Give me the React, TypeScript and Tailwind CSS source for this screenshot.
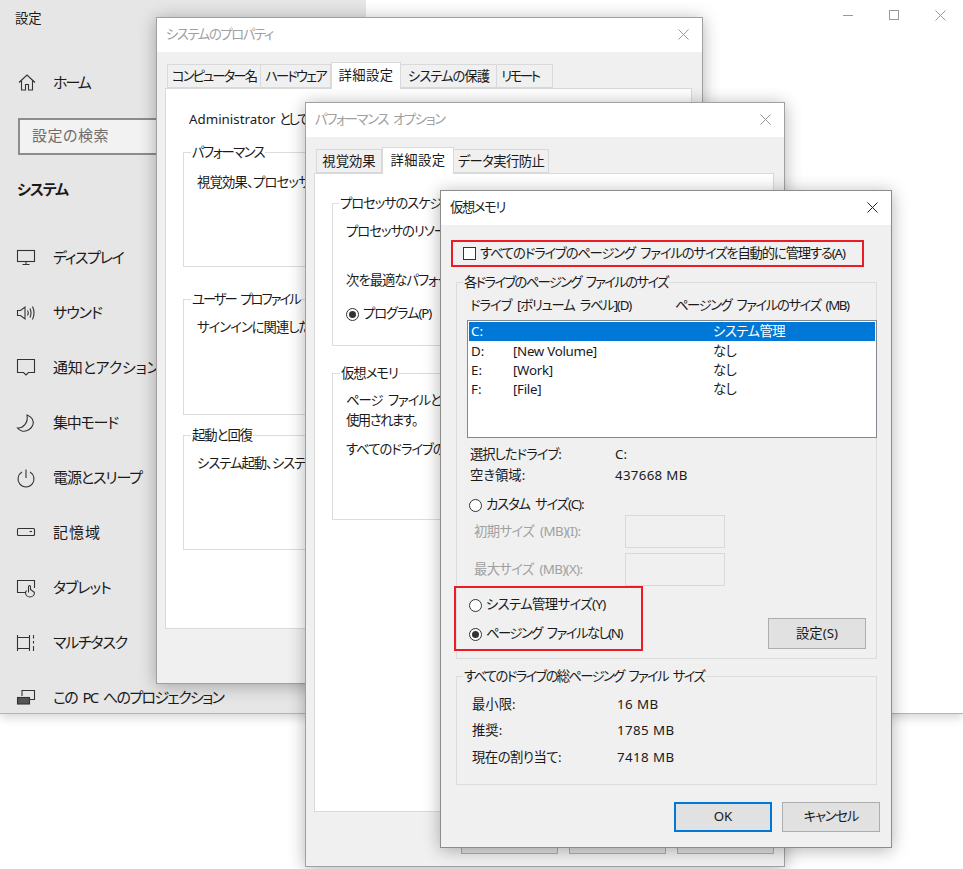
import type { ReactNode } from "react";

const navItems = [
  { label: "ディスプレイ", text: "tracking-[-1.3px]", icon: <><rect x="1.5" y="2.5" width="17" height="11" /><path d="M10 13.5V16M6.5 16.5H13.5" /></> },
  { label: "サウンド", text: "tracking-[-1px]", icon: <path d="M1.5 7.5H4.5L9 4V16L4.5 12.5H1.5ZM11.5 7.5Q13 10 11.5 12.5M14 5.5Q16 10 14 14.5M16.5 3.5Q19.5 10 16.5 16.5" /> },
  { label: "通知とアクション", text: "tracking-[-0.2px]", icon: <path d="M1.5 1.5H18.5V14.5H12.5L10 17L7.5 14.5H1.5Z" /> },
  { label: "集中モード", text: "tracking-[-1.2px]", icon: <path d="M11 2C16 3.5 18 8 17 11.5C15.5 16 11 19 6 18C4 17.5 2.5 16.5 1.5 15C7 15.5 12.5 10 11 2Z" /> },
  { label: "電源とスリープ", text: "tracking-[-1.1px]", icon: <path d="M6 4A8 8 0 1 0 14 4M10 1.5V10" /> },
  { label: "記憶域", text: "tracking-[1px]", icon: <><rect x="1.5" y="5.5" width="17" height="7" rx="1" /><path d="M13.5 8.5H16" /></> },
  { label: "タブレット", text: "tracking-[-1px]", icon: <path d="M9 14.5H1.5V2.5H18.5V10M18.5 14.5A4.5 4.5 0 1 1 9.5 14.5L10.5 12.5M12.5 14.5V8.5A1 1 0 0 1 14.5 8.5V11.5L18.5 14.5" /> },
  { label: "マルチタスク", text: "tracking-[-1.2px]", icon: <path d="M1.5 2V18M13.5 2V18M1.5 4.5H13.5M1.5 15.5H13.5M17.5 2V5.5M17.5 8V10.5M17.5 13V18" /> },
  { label: "この PC へのプロジェクション", text: "tracking-[-1.65px]", icon: <><path d="M6 8V2.5H18.5V11.5H14" /><rect x="1.5" y="9.5" width="12" height="6.5" fill="#555" /></> },
];

const NavIcon = ({ children }: { children: ReactNode }) => (
  <svg viewBox="0 0 20 20" className="h-5 w-5 shrink-0" fill="none" stroke="#333" strokeWidth="1.1">
    {children}
  </svg>
);

const CloseIcon = ({ color }: { color: string }) => (
  <svg viewBox="0 0 11 11" className="h-[11px] w-[11px]" fill="none" stroke={color} strokeWidth="1">
    <path d="M0.5 0.5L10.5 10.5M10.5 0.5L0.5 10.5" />
  </svg>
);

const TitleBar = ({ title, active }: { title: string; active?: boolean }) => (
  <div className={`flex h-[34px] shrink-0 items-center justify-between bg-white pr-[13px] pb-[2px] pl-[9px] tracking-[-1.4px] ${active ? "text-[#222]" : "text-[#a0a0a0]"}`}>
    <span className="mt-[2px]">{title}</span>
    <CloseIcon color={active ? "#222" : "#999"} />
  </div>
);

const Group = ({ title, titleClass, className, bg, children }: { title: string; titleClass: string; className: string; bg: string; children?: ReactNode }) => (
  <div className={`relative border border-[#dcdcdc] ${className}`}>
    <span className={`absolute -top-[10px] px-px leading-[18px] whitespace-nowrap ${titleClass} ${bg}`}>{title}</span>
    {children}
  </div>
);

const Tab = ({ label, width, text, selected }: { label: string; width: string; text?: string; selected?: boolean }) => (
  <div
    className={`flex items-center justify-center border border-[#d9d9d9] whitespace-nowrap ${width} ${text ?? ""} ${
      selected ? "relative z-10 -mb-px h-[27px] border-b-0 bg-white" : "h-[24px] -ml-px bg-[#f0f0f0] pt-px"
    }`}
  >
    {label}
  </div>
);

const Radio = ({ checked }: { checked?: boolean }) => (
  <span className="flex h-[13px] w-[13px] shrink-0 items-center justify-center rounded-full border border-[#333] bg-white">
    {checked && <span className="h-[7px] w-[7px] rounded-full bg-[#333]" />}
  </span>
);

const RadioRow = ({ label, text, checked }: { label: string; text: string; checked?: boolean }) => (
  <div className="flex h-[20px] items-center gap-[4px]">
    <Radio checked={checked} />
    <span className={`whitespace-nowrap ${text}`}>{label}</span>
  </div>
);

const DriveRow = ({ drive, label, size, selected }: { drive: string; label?: string; size: string; selected?: boolean }) => (
  <div className={`flex h-[19px] items-center pl-[2px] ${selected ? "bg-[#0078d7] text-white" : "pt-[2px]"}`}>
    <span className="w-[42px]">{drive}</span>
    <span className="w-[200px] tracking-[-0.3px] [word-spacing:0]">{label}</span>
    <span className="tracking-[-0.5px]">{size}</span>
  </div>
);

const DisabledField = ({ label, text }: { label: string; text: string }) => (
  <div className="flex h-[33px] items-center pl-[7px] text-[#a0a0a0]">
    <span className={`w-[151px] whitespace-nowrap ${text}`}>{label}</span>
    <div className="h-[33px] w-[100px] border border-[#d9d9d9] bg-[#f0f0f0]" />
  </div>
);

const Button = ({ label, className }: { label: string; className: string }) => (
  <div className={`flex items-center justify-center bg-[#e1e1e1] ${className}`}>{label}</div>
);

const SummaryRow = ({ label, value, text, className }: { label: string; value: string; text?: string; className: string }) => (
  <div className={`flex h-[20px] items-center ${className}`}>
    <span className={`w-[145px] ${text ?? ""}`}>{label}</span>
    <span className="tracking-[0.4px] [word-spacing:0]">{value}</span>
  </div>
);

export default function App() {
  return (
    <div className="relative h-[869px] w-[963px] overflow-hidden bg-white font-['Noto_Sans','Noto_Sans_CJK_JP',sans-serif] text-[13.33px] text-[#1a1a1a] [font-feature-settings:'palt'] [word-spacing:3px]">
      {/* Settings window behind the dialogs */}
      <div className="flex h-[714px] border-b border-[#b4b4b4] shadow-[0_3px_10px_rgba(0,0,0,0.18)]">
        <aside className="w-[366px] shrink-0 overflow-hidden bg-[#e6e6e6] text-[15px]">
          <div className="flex h-[38px] items-center pl-[15px] text-[13.33px]">設定</div>
          <div className="mt-[23px] flex h-[44px] items-center gap-[17px] pl-4">
            <NavIcon>
              <path d="M3 9.5L11 2L19 9.5M5.5 7.5V17H9.5V11.5H12.5V17H16.5V7.5" />
            </NavIcon>
            <span className="pb-px tracking-[-2px]">ホーム</span>
          </div>
          <div className="mt-[13px] ml-[18px] flex h-[37px] w-[330px] items-center border-2 border-[#8c8c8c] bg-[#f2f2f2] pb-[2px] pl-3 tracking-[0.5px] text-[#6e6e6e]">
            設定の検索
          </div>
          <div className="mt-[22px] flex h-[24px] items-center pl-[17px] font-bold tracking-[-1.1px]">システム</div>
          <nav className="mt-[29px]">
            {navItems.map((item) => (
              <div key={item.label} className="flex h-[55px] items-center gap-[17px] pl-4">
                <NavIcon>{item.icon}</NavIcon>
                <span className={`pb-px whitespace-nowrap ${item.text}`}>{item.label}</span>
              </div>
            ))}
          </nav>
        </aside>
        <main className="relative flex-1 bg-white">
          <div className="flex h-[30px] items-center justify-end gap-[36px] pr-[17px]">
            <div className="h-px w-[10px] bg-[#999]" />
            <div className="h-[10px] w-[10px] border border-[#999]" />
            <CloseIcon color="#999" />
          </div>
          <p className="absolute top-[133px] left-[350px] text-[14px] leading-[20px] tracking-[-1px] whitespace-nowrap text-[#0078d7]">レード</p>
        </main>
      </div>

      {/* システムのプロパティ */}
      <div className="absolute top-[17px] left-[156px] flex h-[667px] w-[547px] flex-col border border-[#a0a0a0] bg-[#f0f0f0] shadow-[0_2px_16px_rgba(0,0,0,0.3)]">
        <TitleBar title="システムのプロパティ" />
        <div className="mt-[10px] flex h-[26px] items-end pl-[11px]">
          <Tab label="コンピューター名" width="w-[94px]" text="tracking-[-1.9px]" />
          <Tab label="ハードウェア" width="w-[71px]" text="tracking-[-1.9px]" />
          <Tab label="詳細設定" width="w-[70px]" text="tracking-[0.4px]" selected />
          <Tab label="システムの保護" width="w-[97px]" text="tracking-[-1px]" />
          <Tab label="リモート" width="w-[57px]" text="pr-[9px] tracking-[-2.4px]" />
        </div>
        <div className="ml-[8px] h-[541px] w-[527px] border border-[#d9d9d9] bg-white pt-[21px] pl-[23px]">
          <p className="h-[20px] whitespace-nowrap [word-spacing:0]">
            <span>Administrator </span>
            <span className="tracking-[-2.2px]">としてログオンしない場合は、これらのほとんどは変更できません。</span>
          </p>
          <Group title="パフォーマンス" titleClass="left-[7px] tracking-[-1.5px]" bg="bg-white" className="mt-[22px] -ml-[6px] h-[115px] w-[498px] pt-[20px] pl-[13px] tracking-[-0.8px]">
            視覚効果、プロセッサのスケジュール、メモリ使用、および仮想メモリ
          </Group>
          <Group title="ユーザー プロファイル" titleClass="left-[7px] tracking-[-2px]" bg="bg-white" className="mt-[32px] -ml-[6px] h-[116px] w-[498px] pt-[18px] pl-[13px] tracking-[-1px]">
            サインインに関連したデスクトップ設定
          </Group>
          <Group title="起動と回復" titleClass="left-[7px]" bg="bg-white" className="mt-[20px] -ml-[6px] h-[115px] w-[498px] pt-[18px] pl-[13px] tracking-[-1px]">
            システム起動、システム エラー、およびデバッグ情報
          </Group>
        </div>
      </div>

      {/* パフォーマンス オプション */}
      <div className="absolute top-[102px] left-[305px] flex h-[765px] w-[480px] flex-col border border-[#a0a0a0] bg-[#f0f0f0] shadow-[0_2px_16px_rgba(0,0,0,0.3)]">
        <TitleBar title="パフォーマンス オプション" />
        <div className="mt-[10px] flex h-[26px] items-end pl-[11px]">
          <Tab label="視覚効果" width="w-[66px]" />
          <Tab label="詳細設定" width="w-[72px]" text="tracking-[0.4px]" selected />
          <Tab label="データ実行防止" width="w-[96px]" text="tracking-[-0.6px]" />
        </div>
        <div className="ml-[8px] h-[639px] w-[460px] border border-[#d9d9d9] bg-white pt-[29px] pl-[17px] tracking-[-1px]">
          <Group title="プロセッサのスケジュール" titleClass="left-[6px] tracking-[-1.1px]" bg="bg-white" className="h-[143px] w-[424px] pt-[18px] pl-[13px]">
            <p className="h-[20px]">プロセッサのリソースの割り当て</p>
            <p className="mt-[29px] h-[20px]">次を最適なパフォーマンスに調整</p>
            <div className="mt-[13px]">
              <RadioRow label="プログラム(P)" text="tracking-[-1.1px]" checked />
            </div>
          </Group>
          <Group title="仮想メモリ" titleClass="left-[7px] tracking-[-1px]" bg="bg-white" className="mt-[27px] h-[147px] w-[424px] pt-[17px] pl-[13px]">
            <p className="h-[20px] whitespace-nowrap">ページ ファイルとは、RAM のように</p>
            <p className="h-[20px] tracking-[-1.5px]">使用されます。</p>
            <p className="mt-[9px] h-[20px] whitespace-nowrap">すべてのドライブの総ページング ファイル サイズ:</p>
          </Group>
        </div>
        <div className="mt-[11px] ml-[155px] flex gap-[11px]">
          <Button label="OK" className="h-[31px] w-[97px] border border-[#adadad]" />
          <Button label="キャンセル" className="h-[31px] w-[97px] border border-[#adadad]" />
          <Button label="適用(A)" className="h-[31px] w-[97px] border border-[#adadad]" />
        </div>
      </div>

      {/* 仮想メモリ */}
      <div className="absolute top-[190px] left-[440px] flex h-[658px] w-[452px] flex-col border border-[#8c8c8c] bg-[#f0f0f0] shadow-[0_2px_16px_rgba(0,0,0,0.3)]">
        <TitleBar title="仮想メモリ" active />
        <div className="pt-[15px]">
          <div className="ml-[10px] flex h-[27px] w-[413px] items-center gap-[4px] border-2 border-[#ed1c24] pl-[10px]">
            <span className="h-[13px] w-[13px] shrink-0 border border-[#333] bg-white" />
            <span className="tracking-[-1.15px] whitespace-nowrap">すべてのドライブのページング ファイルのサイズを自動的に管理する(A)</span>
          </div>

          <Group title="各ドライブのページング ファイルのサイズ" titleClass="left-[6px] tracking-[-1.65px]" bg="bg-[#f0f0f0]" className="mt-[15px] ml-[15px] h-[377px] w-[421px] pt-[13px] pl-[10px]">
            <div className="mb-[4px] flex h-[20px] items-center pl-[3px]">
              <span className="w-[47px] tracking-[-1px]">ドライブ</span>
              <span className="w-[158px] tracking-[-1.2px]">[ボリューム ラベル](D)</span>
              <span className="tracking-[-1.4px]">ページング ファイルのサイズ (MB)</span>
            </div>
            <div className="h-[118px] w-[410px] border border-[#828790] bg-white p-px">
              <DriveRow drive="C:" size="システム管理" selected />
              <DriveRow drive="D:" label="[New Volume]" size="なし" />
              <DriveRow drive="E:" label="[Work]" size="なし" />
              <DriveRow drive="F:" label="[File]" size="なし" />
            </div>
            <div className="mt-[6px] flex h-[21px] items-center pl-[3px]">
              <span className="w-[145px] tracking-[-1px]">選択したドライブ:</span>
              <span>C:</span>
            </div>
            <div className="flex h-[21px] items-center pl-[3px]">
              <span className="w-[145px]">空き領域:</span>
              <span className="tracking-[0.3px] [word-spacing:0]">437668 MB</span>
            </div>
            <div className="mt-[9px] pl-[2px]">
              <RadioRow label="カスタム サイズ(C):" text="tracking-[-1.15px]" />
            </div>
            <DisabledField label="初期サイズ (MB)(I):" text="tracking-[-0.55px]" />
            <div className="mt-[5px]">
              <DisabledField label="最大サイズ (MB)(X):" text="tracking-[-0.65px]" />
            </div>
            <div className="flex items-end">
              <div className="-ml-[13px] h-[65px] w-[189px] border-2 border-[#ed1c24] pt-[7px] pl-[13px]">
                <RadioRow label="システム管理サイズ(Y)" text="tracking-[-0.6px]" />
                <div className="mt-[9px]">
                  <RadioRow label="ページング ファイルなし(N)" text="tracking-[-1.5px]" checked />
                </div>
              </div>
              <Button label="設定(S)" className="mb-[2px] ml-[125px] h-[31px] w-[98px] border border-[#adadad]" />
            </div>
          </Group>

          <Group title="すべてのドライブの総ページング ファイル サイズ" titleClass="left-[6px] tracking-[-1.65px]" bg="bg-[#f0f0f0]" className="mt-[17px] ml-[15px] h-[109px] w-[421px] pt-[18px] pl-[15px]">
            <SummaryRow label="最小限:" value="16 MB" className="" />
            <SummaryRow label="推奨:" value="1785 MB" className="mt-[6px]" />
            <SummaryRow label="現在の割り当て:" value="7418 MB" text="tracking-[-0.5px]" className="mt-[7px]" />
          </Group>

          <div className="mt-[17px] ml-[233px] flex gap-[10px]">
            <Button label="OK" className="h-[30px] w-[98px] border-2 border-[#0078d7]" />
            <Button label="キャンセル" className="h-[30px] w-[98px] border border-[#adadad] tracking-[-1.2px]" />
          </div>
        </div>
      </div>
    </div>
  );
}
